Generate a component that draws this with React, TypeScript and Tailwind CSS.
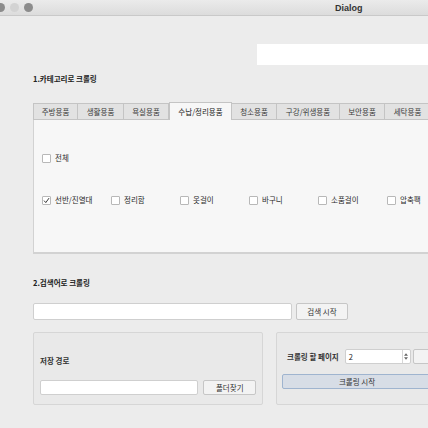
import React from "react";

const tabs = [
  { label: "주방용품", w: "w-[45px]" },
  { label: "생활용품", w: "w-[46px]" },
  { label: "욕실용품", w: "w-[45px]" },
  { label: "수납/정리용품", w: "w-[63px]", active: true },
  { label: "청소용품", w: "w-[45px]" },
  { label: "구강/위생용품", w: "w-[63px]" },
  { label: "보안용품", w: "w-[45px]" },
  { label: "세탁용품", w: "w-[46px]" },
];

const items = [
  { label: "선반/진열대", checked: true },
  { label: "정리함" },
  { label: "옷걸이" },
  { label: "바구니" },
  { label: "소품걸이" },
  { label: "압축팩" },
];

function Check({ label, checked }: { label: string; checked?: boolean }) {
  return (
    <div className="flex items-center gap-[4px] w-[69px] shrink-0">
      <span className="w-[9px] h-[9px] bg-white border border-[#b8b8b8] rounded-[1px] flex items-center justify-center shrink-0">
        {checked && (
          <svg viewBox="0 0 10 10" className="w-[7px] h-[7px]">
            <path d="M1.5 5.2 L4 8 L8.6 1.6" fill="none" stroke="#333" strokeWidth="1.4" />
          </svg>
        )}
      </span>
      <span className="text-[#2a2a2a]">{label}</span>
    </div>
  );
}

export default function App() {
  return (
    <div
      className="w-[428px] h-[428px] overflow-hidden bg-[#ececec] text-[7.5px] leading-[10px] text-[#222]"
      style={{ fontFamily: '"Noto Sans CJK KR", "Noto Sans", sans-serif' }}
    >
      {/* title bar */}
      <div className="h-[16px] flex items-center border-b border-[#c9c9c9] bg-gradient-to-b from-[#ebebeb] to-[#dcdcdc]">
        <div className="flex items-center gap-[5px] ml-[-4px]">
          <span className="w-[9px] h-[9px] rounded-full bg-[#8c8c8c]" />
          <span className="w-[9px] h-[9px] rounded-full bg-[#d3d3d3]" />
          <span className="w-[9px] h-[9px] rounded-full bg-[#8c8c8c]" />
        </div>
        <span className="ml-[302px] font-bold text-[9px] text-[#333]" style={{ fontFamily: '"Liberation Sans", Arial, sans-serif' }}>
          Dialog
        </span>
      </div>

      <div className="pl-[33px] flex flex-col">
        <div className="mt-[28px] ml-auto w-[171px] h-[21px] bg-white" />

        <div className="mt-[9px] font-bold">1.카테고리로 크롤링</div>

        {/* tabs */}
        <div className="mt-[18px] flex items-end h-[18px]">
          {tabs.map((t) => (
            <div
              key={t.label}
              className={`${t.w} shrink-0 flex items-center justify-center border-t border-r border-[#c4c4c4] ${
                t.active
                  ? "h-[18px] bg-[#f7f7f7] border-l border-b-0 text-[#222]"
                  : "h-[17px] bg-[#e2e2e2] border-b text-[#3a3a3a]"
              } first:border-l`}
            >
              {t.label}
            </div>
          ))}
        </div>

        {/* tab panel */}
        <div className="w-[420px] h-[134px] bg-[#f7f7f7] border-l border-b-2 border-[#d2d2d2] pl-[8px] pt-[33px] flex flex-col">
          <Check label="전체" />
          <div className="mt-[32px] flex">
            {items.map((i) => (
              <Check key={i.label} label={i.label} checked={i.checked} />
            ))}
          </div>
        </div>

        <div className="mt-[24px] font-bold">2.검색어로 크롤링</div>

        <div className="mt-[15px] flex items-center gap-[4px]">
          <div className="w-[259px] h-[17px] bg-white border border-[#cfcfcf] rounded-[2px]" />
          <div className="w-[52px] h-[17px] bg-[#f3f3f3] border border-[#c6c6c6] rounded-[2px] flex items-center justify-center text-[#333]">
            검색 시작
          </div>
        </div>

        <div className="mt-[12px] flex gap-[13px]">
          {/* save path group */}
          <div className="w-[230px] h-[73px] border border-[#d6d6d6] bg-[#e9e9e9] rounded-[2px] px-[6px] flex flex-col">
            <div className="mt-[23px] font-bold text-[#333]">저장 경로</div>
            <div className="mt-[14px] flex gap-[5px]">
              <div className="w-[160px] h-[15px] bg-white border border-[#cfcfcf] rounded-[2px]" />
              <div className="w-[53px] h-[15px] bg-[#f3f3f3] border border-[#c6c6c6] rounded-[2px] flex items-center justify-center text-[#333]">
                폴더찾기
              </div>
            </div>
          </div>

          {/* crawling group */}
          <div className="w-[200px] h-[73px] border border-[#d6d6d6] bg-[#e9e9e9] rounded-[2px] pl-[5px] flex flex-col">
            <div className="mt-[16px] flex items-center">
              <span className="ml-[5px] font-bold text-[#333]">크롤링 할 페이지</span>
              <div className="ml-[6px] w-[66px] h-[15px] bg-white border border-[#cfcfcf] rounded-[2px] flex items-center">
                <span className="flex-1 pl-[3px] text-[#222]">2</span>
                <div className="w-[8px] h-full border-l border-[#d6d6d6] flex flex-col items-center justify-center gap-[1px]">
                  <svg viewBox="0 0 6 4" className="w-[4px] h-[3px]"><path d="M0 4 L3 0 L6 4Z" fill="#666" /></svg>
                  <svg viewBox="0 0 6 4" className="w-[4px] h-[3px]"><path d="M0 0 L3 4 L6 0Z" fill="#666" /></svg>
                </div>
              </div>
              <div className="ml-[2px] w-[30px] h-[15px] bg-[#f3f3f3] border border-[#c6c6c6] rounded-[2px]" />
            </div>
            <div className="mt-[10px] w-[200px] h-[15px] bg-[#d7dde6] border border-[#9fb4cf] rounded-[2px] flex items-center justify-center text-[#333] pr-[50px]">
              크롤링 시작
            </div>
          </div>
        </div>
      </div>
    </div>
  );
}
